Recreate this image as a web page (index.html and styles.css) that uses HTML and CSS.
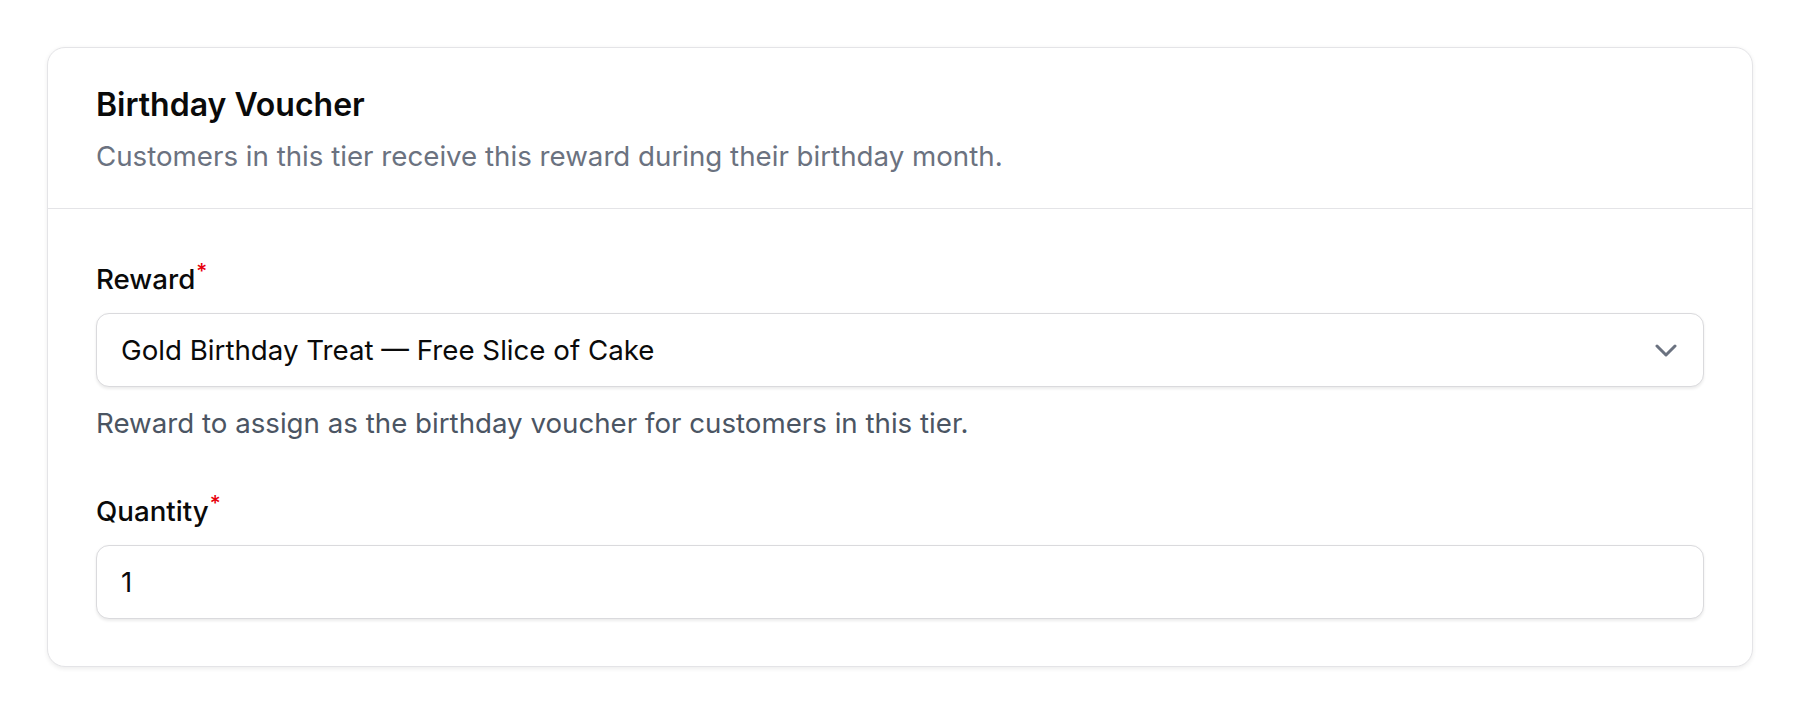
FILE: index.html
```html
<!DOCTYPE html>
<html lang="en">
<head>
  <meta charset="UTF-8" />
  <meta name="viewport" content="width=device-width, initial-scale=1.0"/>
  <title>Birthday Voucher</title>
  <link rel="stylesheet" href="styles.css">
</head>
<body>
  <div class="card">
    <div class="card-header">
      <h2 class="card-title">Birthday Voucher</h2>
      <p class="card-desc">Customers in this tier receive this reward during their birthday month.</p>
    </div>

    <div class="card-body">
      <div class="field">
        <label for="reward" class="field-label">Reward<span class="req">*</span></label>
        <div class="select-wrap">
          <select id="reward" class="control">
            <option>Gold Birthday Treat — Free Slice of Cake</option>
          </select>
          <svg class="chevron" width="22" height="13" viewBox="0 0 22 13" aria-hidden="true">
            <path d="M2 2L11 11L20 2" fill="none" stroke="currentColor" stroke-width="3" stroke-linecap="round" stroke-linejoin="round"/>
          </svg>
        </div>
        <p class="field-help">Reward to assign as the birthday voucher for customers in this tier.</p>
      </div>

      <div class="field">
        <label for="qty" class="field-label">Quantity<span class="req">*</span></label>
        <input id="qty" class="control" type="text" inputmode="numeric" value="1" />
      </div>
    </div>
  </div>
</body>
</html>
```

FILE: styles.css
```css
body {
  margin: 0;
  padding: 47px;
  background-color: #fff;
  font-family: 'Inter', 'Noto Sans', sans-serif;
  color: #0a0a0a;
}
.card {
  background-color: #fff;
  border: 1px solid #e4e4e7;
  border-radius: 18px;
  box-shadow: 0 1.5px 4px rgba(0, 0, 0, 0.07);
}
.card-header {
  padding: 36px 48px 31px;
  border-bottom: 1px solid #e4e4e7;
}
.card-title {
  margin: 0;
  font-size: 32px;
  line-height: 42px;
  font-weight: 600;
  color: #0a0a0a;
}
.card-desc {
  margin: 9px 0 0;
  font-size: 27.7px;
  line-height: 42px;
  color: #6b7280;
}
.card-body {
  padding: 42px 48px 47px;
}
.field + .field {
  margin-top: 39px;
}
.field-label {
  display: block;
  margin-bottom: 13px;
  font-size: 27.7px;
  line-height: 42px;
  font-weight: 500;
}
.req {
  color: #e7000b;
  font-size: 21px;
  vertical-align: 10px;
  margin-left: 1px;
}
.select-wrap {
  position: relative;
}
.control {
  display: block;
  width: 100%;
  box-sizing: border-box;
  height: 74px;
  padding: 0 24px;
  border: 1px solid #dadadd;
  border-radius: 13px;
  background-color: #fff;
  box-shadow: 0 1.5px 3px rgba(0, 0, 0, 0.08);
  font-family: inherit;
  font-size: 27.7px;
  color: #0a0a0a;
  outline: none;
}
select.control {
  appearance: none;
  -webkit-appearance: none;
  padding-right: 70px;
}
.chevron {
  position: absolute;
  right: 27px;
  top: 50%;
  margin-top: -6.5px;
  color: #6b7280;
  pointer-events: none;
}
.field-help {
  margin: 15px 0 0;
  font-size: 27.7px;
  line-height: 42px;
  color: #4b5563;
}
```
